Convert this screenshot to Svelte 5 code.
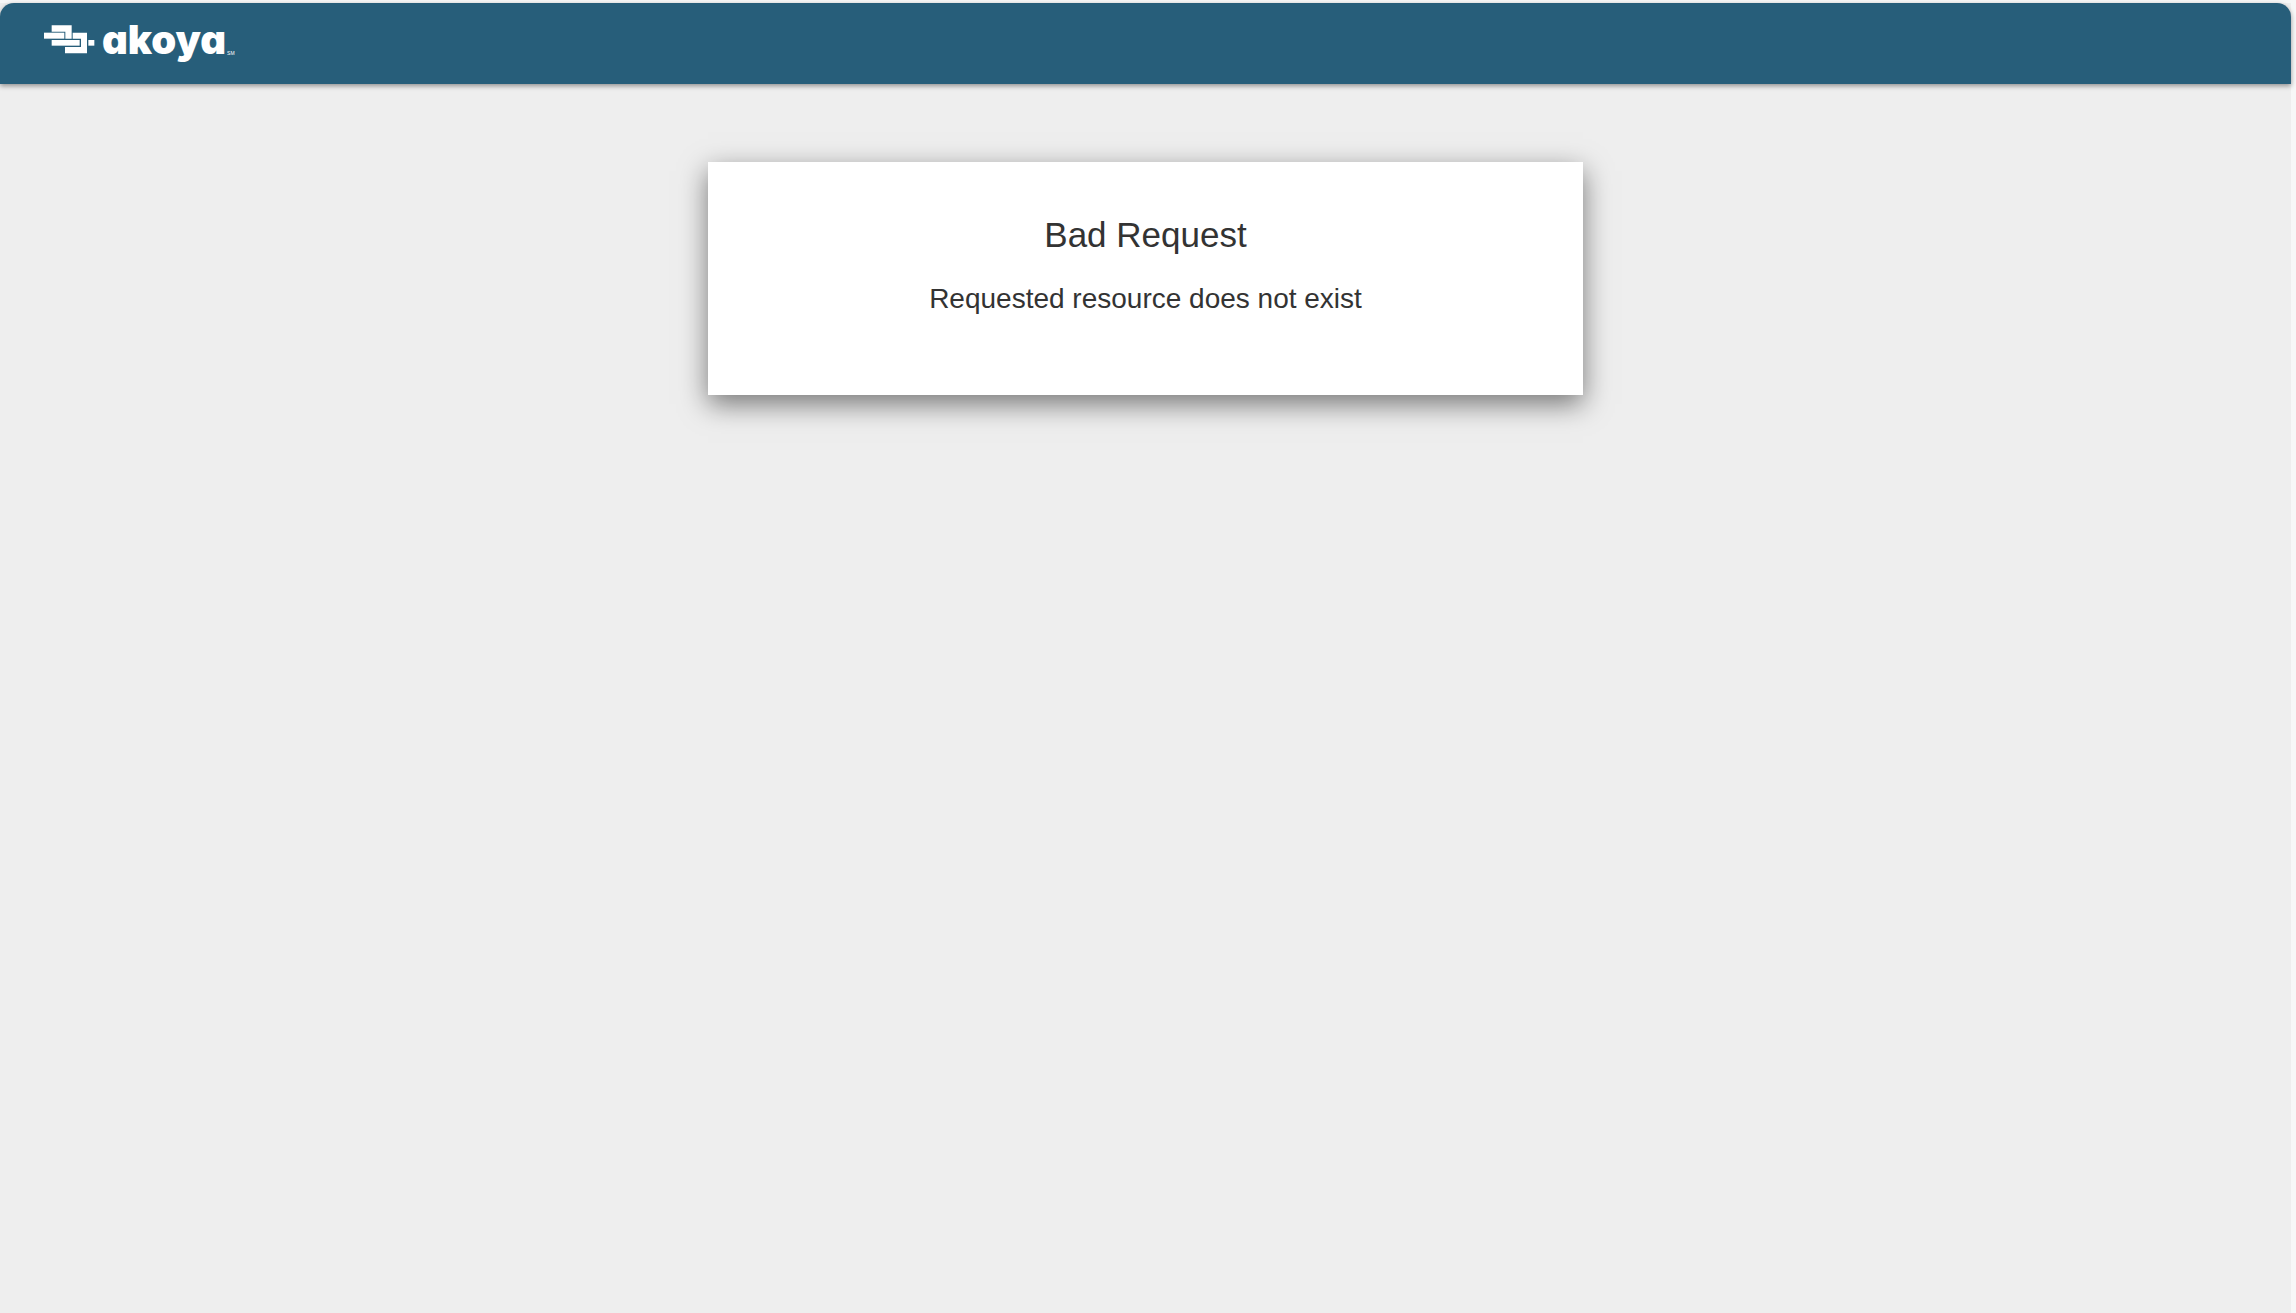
<script>
    export let title = "Bad Request";
    export let message = "Requested resource does not exist";
</script>

<div class="page">
    <header>
        <a class="brand" href="/" aria-label="akoya">
            <svg class="links" viewBox="42 47 153 87" aria-hidden="true">
                <path d="M65 48H125V88H106V67H65Z" />
                <path d="M42 70H103V88H42Z" />
                <path d="M65 92H149V109H65Z" />
                <path d="M128 70H171V132H105V113H153V88H128Z" />
                <path d="M175 92H193V109H175Z" />
            </svg>
            <span class="name">akoya</span>
            <span class="mark">SM</span>
        </a>
    </header>

    <main>
        <section class="card">
            <h1>{title}</h1>
            <p>{message}</p>
        </section>
    </main>
</div>

<style>
    :global(body) {
        background-color: #f7f7f7;
    }

    .page {
        box-sizing: border-box;
        min-height: 100vh;
        border: solid #f7f7f7;
        border-width: 3px 5px 0 0;
        border-radius: 0 0 4px 0;
        background-color: #eee;
        background-clip: padding-box;
        font-family: "Liberation Sans", Arial, sans-serif;
        color: #333;
    }

    header {
        display: flex;
        align-items: center;
        box-sizing: border-box;
        height: 81px;
        padding: 0 44px 8px;
        border-radius: 14px 14px 0 0;
        background-color: #275e7a;
        box-shadow: 0 2px 5px rgba(0, 0, 0, 0.4);
    }

    .brand {
        display: flex;
        align-items: center;
        color: #fff;
        text-decoration: none;
    }

    .links {
        width: 51px;
        height: 29px;
        margin-right: 7px;
        fill: currentColor;
    }

    /* cv11 is the single-storey a */
    .name {
        font-family: Inter, sans-serif;
        font-size: 40px;
        font-weight: 900;
        font-feature-settings: "cv11";
        line-height: 56px;
    }

    .mark {
        margin: 26px 0 0 1px;
        font-size: 5px;
        line-height: 6px;
    }

    main {
        display: flex;
        justify-content: center;
        padding: 78px 16px;
    }

    .card {
        box-sizing: border-box;
        width: 875px;
        padding: 53px 26px 73px;
        background-color: #fff;
        box-shadow: 0 9px 26px rgba(0, 0, 0, 0.5);
        text-align: center;
    }

    h1 {
        margin: 0 0 21px;
        font-size: 35px;
        font-weight: 400;
        line-height: 40px;
    }

    p {
        margin: 0;
        font-size: 28px;
        line-height: 46px;
    }
</style>
